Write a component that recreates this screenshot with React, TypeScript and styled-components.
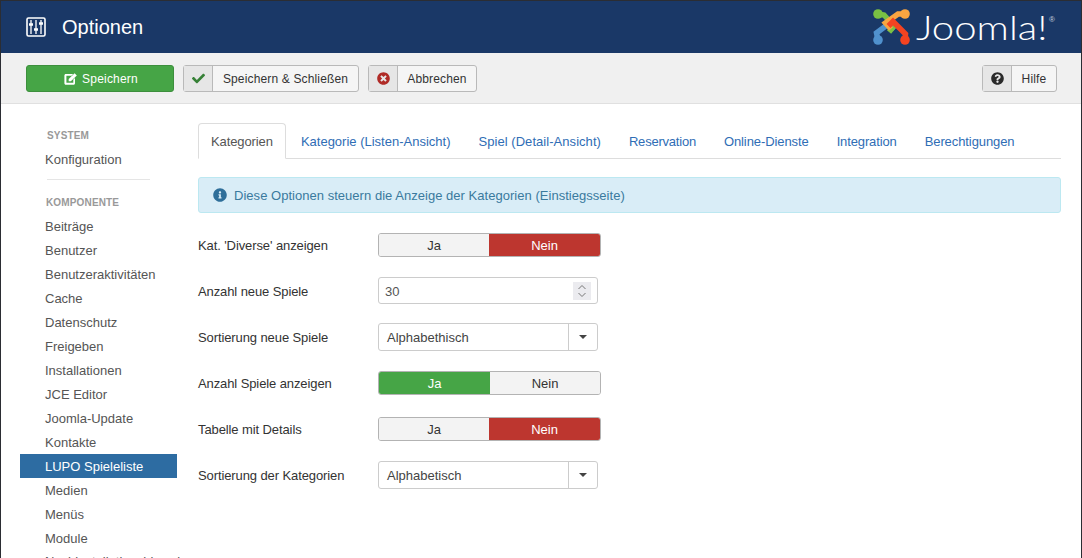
import React from "react";
import styled, { createGlobalStyle } from "styled-components";
import { FaCheck, FaQuestionCircle, FaTimesCircle, FaInfoCircle } from "react-icons/fa";

const GlobalStyle = createGlobalStyle`
  html, body {
    margin: 0;
    padding: 0;
    height: 558px;
    overflow: hidden;
    background: #fff;
  }
  body {
    font-family: "Liberation Sans", Arial, sans-serif;
    font-size: 13px;
    color: #333;
  }
`;

const Page = styled.div`
  height: 558px;
  box-sizing: border-box;
  overflow: hidden;
  border: 1px solid #2b2d33;
  border-bottom: 0;
`;

const Header = styled.header`
  height: 52px;
  background: #1a3867;
  display: flex;
  align-items: center;
  justify-content: space-between;
  padding: 0 25px;
`;

const PageTitle = styled.h1`
  display: flex;
  align-items: center;
  gap: 16px;
  margin: 0;
  font-size: 20px;
  font-weight: 400;
  color: #fff;
`;

const Brand = styled.div`
  display: flex;
  align-items: center;
  gap: 2px;
  color: #fff;
`;

const WordMark = styled.span`
  display: inline-block;
  width: 131px;
  font-family: "Lato", sans-serif;
  font-weight: 300;
  font-size: 34px;
  line-height: 40px;
  white-space: nowrap;
  transform: scaleX(1.18);
  transform-origin: left center;
`;

const Registered = styled.sup`
  width: 7px;
  font-size: 8px;
  line-height: 8px;
  align-self: flex-start;
  margin: 9px 0 0;
  color: #c7d0de;
`;

const Toolbar = styled.div`
  height: 51px;
  box-sizing: border-box;
  background: #f0f0f0;
  border-bottom: 1px solid #e0e0e0;
  display: flex;
  align-items: center;
  gap: 9px;
  padding: 1px 24px 0 25px;
`;

const SaveButton = styled.button`
  width: 148px;
  height: 27px;
  display: flex;
  align-items: center;
  justify-content: center;
  gap: 5px;
  padding: 0 0 0 2px;
  background: #46a546;
  border: 1px solid #3d8f3d;
  border-radius: 3px;
  color: #fff;
  font: 12px "Liberation Sans", Arial, sans-serif;
  letter-spacing: 0.2px;
`;

const ToolButton = styled.button<{ $right?: boolean }>`
  height: 27px;
  display: flex;
  align-items: stretch;
  padding: 0;
  margin-left: ${(p) => (p.$right ? "auto" : "0")};
  background: #f5f5f5;
  border: 1px solid #b9b9b9;
  border-radius: 3px;
  color: #333;
  font: 12px "Liberation Sans", Arial, sans-serif;
  letter-spacing: 0.15px;
`;

const ToolIcon = styled.span<{ $color: string }>`
  width: 28px;
  display: flex;
  align-items: center;
  justify-content: center;
  background: #e6e6e6;
  border-right: 1px solid #b9b9b9;
  color: ${(p) => p.$color};
  font-size: 13px;
`;

const ToolLabel = styled.span<{ $width: number }>`
  width: ${(p) => p.$width}px;
  display: flex;
  align-items: center;
  justify-content: center;
`;

const Body = styled.div`
  display: flex;
  align-items: flex-start;
  padding: 19px 20px 0 19px;
  gap: 21px;
`;

const Sidebar = styled.nav`
  width: 157px;
  flex: none;
`;

const SideHeading = styled.div<{ $inset: number }>`
  height: 24px;
  line-height: 26px;
  padding-left: ${(p) => p.$inset}px;
  font-size: 10px;
  font-weight: 700;
  letter-spacing: 0.15px;
  color: #999;
`;

const SideItem = styled.a<{ $active?: boolean }>`
  display: block;
  height: 24px;
  line-height: 26px;
  padding-left: 25px;
  font-size: 13px;
  color: ${(p) => (p.$active ? "#fff" : "#555")};
  background: ${(p) => (p.$active ? "#2d6ca2" : "transparent")};
  &:last-child {
    margin-top: -1px;
  }
`;

const SideRule = styled.hr`
  width: 103px;
  margin: 8px 0 10px 27px;
  border: 0;
  border-top: 1px solid #e5e5e5;
`;

const Content = styled.main`
  flex: 1;
  min-width: 0;
`;

const Tabs = styled.div`
  display: flex;
  height: 36px;
  box-sizing: border-box;
  border-bottom: 1px solid #ddd;
`;

const Tab = styled.a<{ $active?: boolean; $tracking: number }>`
  height: 36px;
  box-sizing: border-box;
  padding: 0 ${(p) => (p.$active ? "12px" : "13px")};
  margin-right: ${(p) => (p.$active ? "1px" : "0")};
  line-height: 36px;
  font-size: 13px;
  letter-spacing: ${(p) => p.$tracking}px;
  white-space: nowrap;
  color: ${(p) => (p.$active ? "#555" : "#2f6db5")};
  background: ${(p) => (p.$active ? "#fff" : "transparent")};
  border: 1px solid ${(p) => (p.$active ? "#ddd" : "transparent")};
  border-bottom-color: ${(p) => (p.$active ? "#fff" : "transparent")};
  border-radius: 4px 4px 0 0;
`;

const Alert = styled.div`
  height: 36px;
  box-sizing: border-box;
  margin: 18px 0;
  padding: 0 14px;
  display: flex;
  align-items: center;
  gap: 7px;
  background: #d9edf7;
  border: 1px solid #bce8f1;
  border-radius: 3px;
  color: #3a7a9e;
  font-size: 13px;
  letter-spacing: 0.03px;
`;

const FormRow = styled.div`
  display: flex;
  align-items: flex-start;
  height: 28px;
  margin-bottom: 18px;
`;

const RowLabel = styled.label`
  width: 180px;
  flex: none;
  font-size: 13px;
  line-height: 30px;
  letter-spacing: -0.1px;
  color: #333;
`;

const Toggle = styled.div`
  width: 223px;
  height: 24px;
  box-sizing: border-box;
  margin-top: 2px;
  display: flex;
  border: 1px solid #b3b3b3;
  border-radius: 3px;
  overflow: hidden;
  font-size: 13px;
`;

const ToggleOption = styled.span<{ $tone?: "yes" | "no" }>`
  flex: 1;
  line-height: 24px;
  text-align: center;
  color: ${(p) => (p.$tone ? "#fff" : "#333")};
  background: ${(p) => (p.$tone === "yes" ? "#46a546" : p.$tone === "no" ? "#bd362f" : "#f3f3f3")};
  &:first-child {
    flex: 0 0 ${(p) => (p.$tone === "yes" ? "111px" : "110px")};
  }
`;

const NumberField = styled.div`
  width: 220px;
  height: 27px;
  box-sizing: border-box;
  display: flex;
  align-items: center;
  justify-content: space-between;
  padding: 0 6px;
  background: #fff;
  border: 1px solid #ccc;
  border-radius: 3px;
  font-size: 13px;
  color: #555;
`;

const NumberValue = styled.span`
  margin-top: 2px;
`;

const Spinner = styled.span`
  width: 18px;
  height: 18px;
  display: flex;
  background: #ebebef;
`;

const SelectBox = styled.div`
  width: 220px;
  height: 28px;
  box-sizing: border-box;
  display: flex;
  background: #fff;
  border: 1px solid #ccc;
  border-radius: 3px;
  font-size: 13px;
  color: #444;
`;

const SelectValue = styled.span`
  flex: 1;
  line-height: 28px;
  padding-left: 8px;
`;

const SelectArrow = styled.span`
  width: 28px;
  display: flex;
  align-items: center;
  justify-content: center;
  border-left: 1px solid #ccc;
  &::after {
    content: "";
    border-top: 4px solid #444;
    border-left: 4px solid transparent;
    border-right: 4px solid transparent;
  }
`;

const OptionsIcon = () => (
  <svg width="20" height="20" viewBox="0 0 20 20" fill="none" stroke="#fff" strokeWidth="1.6">
    <rect x="1" y="1" width="18" height="18" rx="1.5" />
    <path d="M5 3v14M10 3v14M15 3v14" strokeWidth="1.3" />
    <path d="M3 7.5h4M8 12.5h4M13 6.5h4" strokeWidth="2.6" />
  </svg>
);

const SaveIcon = () => (
  <svg width="13" height="12" viewBox="0 0 13 12" fill="#fff">
    <path d="M1.8 1h7.4L7.5 2.8H2.4v6.9h6.9V6.6L11 5v5.2c0 .8-.6 1.5-1.4 1.5H1.8c-.8 0-1.4-.7-1.4-1.5V2.5C.4 1.7 1 1 1.8 1z" />
    <path d="M10.6.2 12.8 2.4 6.9 8.3H4.7V6.1z" />
  </svg>
);

// four hooked arms, drawn back to front so they interlock
const JoomlaMark = () => (
  <svg width="41" height="38" viewBox="0 0 41 38" fill="none" strokeWidth="5.5">
    <circle cx="5" cy="32" r="4.8" fill="#5091cd" />
    <path d="M5 32 3.5 25 16 15.5 22 21" stroke="#5091cd" />
    <circle cx="5" cy="6" r="4.8" fill="#7ac143" />
    <path d="M5 6 11 7 21 18 16 24" stroke="#7ac143" />
    <circle cx="32" cy="6" r="4.8" fill="#f9a541" />
    <path d="M32 6 25 6 12.5 15 18 21" stroke="#f9a541" />
    <circle cx="32" cy="32" r="4.8" fill="#f44321" />
    <path d="M32 32 32.5 26 20 13.5 15.5 18" stroke="#f44321" />
  </svg>
);

const YesNo = ({ value }: { value: "yes" | "no" }) => (
  <Toggle>
    <ToggleOption $tone={value === "yes" ? "yes" : undefined}>Ja</ToggleOption>
    <ToggleOption $tone={value === "no" ? "no" : undefined}>Nein</ToggleOption>
  </Toggle>
);

const components = [
  "Beiträge",
  "Benutzer",
  "Benutzeraktivitäten",
  "Cache",
  "Datenschutz",
  "Freigeben",
  "Installationen",
  "JCE Editor",
  "Joomla-Update",
  "Kontakte",
  "LUPO Spieleliste",
  "Medien",
  "Menüs",
  "Module",
  "Nachinstallationshinweise",
];

const tabs = [
  { label: "Kategorien", tracking: -0.1 },
  { label: "Kategorie (Listen-Ansicht)", tracking: 0 },
  { label: "Spiel (Detail-Ansicht)", tracking: 0.05 },
  { label: "Reservation", tracking: -0.22 },
  { label: "Online-Dienste", tracking: -0.09 },
  { label: "Integration", tracking: -0.13 },
  { label: "Berechtigungen", tracking: -0.09 },
];

const App: React.FC = () => (
  <Page>
    <GlobalStyle />
    <Header>
      <PageTitle>
        <OptionsIcon />
        Optionen
      </PageTitle>
      <Brand>
        <JoomlaMark />
        <WordMark>Joomla!</WordMark>
        <Registered>®</Registered>
      </Brand>
    </Header>
    <Toolbar>
      <SaveButton>
        <SaveIcon />
        Speichern
      </SaveButton>
      <ToolButton>
        <ToolIcon $color="#378137">
          <FaCheck />
        </ToolIcon>
        <ToolLabel $width={145}>Speichern &amp; Schließen</ToolLabel>
      </ToolButton>
      <ToolButton>
        <ToolIcon $color="#b02b27">
          <FaTimesCircle />
        </ToolIcon>
        <ToolLabel $width={78}>Abbrechen</ToolLabel>
      </ToolButton>
      <ToolButton $right>
        <ToolIcon $color="#2a2a2a">
          <FaQuestionCircle />
        </ToolIcon>
        <ToolLabel $width={44}>Hilfe</ToolLabel>
      </ToolButton>
    </Toolbar>
    <Body>
      <Sidebar>
        <SideHeading $inset={27}>SYSTEM</SideHeading>
        <SideItem>Konfiguration</SideItem>
        <SideRule />
        <SideHeading $inset={26}>KOMPONENTE</SideHeading>
        {components.map((name) => (
          <SideItem key={name} $active={name === "LUPO Spieleliste"}>
            {name}
          </SideItem>
        ))}
      </Sidebar>
      <Content>
        <Tabs>
          {tabs.map((tab, index) => (
            <Tab key={tab.label} $active={index === 0} $tracking={tab.tracking}>
              {tab.label}
            </Tab>
          ))}
        </Tabs>
        <Alert>
          <FaInfoCircle color="#2f6f9a" size={14} />
          Diese Optionen steuern die Anzeige der Kategorien (Einstiegsseite)
        </Alert>
        <FormRow>
          <RowLabel>Kat. 'Diverse' anzeigen</RowLabel>
          <YesNo value="no" />
        </FormRow>
        <FormRow>
          <RowLabel>Anzahl neue Spiele</RowLabel>
          <NumberField>
            <NumberValue>30</NumberValue>
            <Spinner>
              <svg width="18" height="18" viewBox="0 0 18 18" fill="none" stroke="#777" strokeWidth="1">
                <path d="M5.5 7 9 3.5 12.5 7M5.5 11 9 14.5 12.5 11" />
              </svg>
            </Spinner>
          </NumberField>
        </FormRow>
        <FormRow>
          <RowLabel>Sortierung neue Spiele</RowLabel>
          <SelectBox>
            <SelectValue>Alphabethisch</SelectValue>
            <SelectArrow />
          </SelectBox>
        </FormRow>
        <FormRow>
          <RowLabel>Anzahl Spiele anzeigen</RowLabel>
          <YesNo value="yes" />
        </FormRow>
        <FormRow>
          <RowLabel>Tabelle mit Details</RowLabel>
          <YesNo value="no" />
        </FormRow>
        <FormRow>
          <RowLabel>Sortierung der Kategorien</RowLabel>
          <SelectBox>
            <SelectValue>Alphabetisch</SelectValue>
            <SelectArrow />
          </SelectBox>
        </FormRow>
      </Content>
    </Body>
  </Page>
);

export default App;
